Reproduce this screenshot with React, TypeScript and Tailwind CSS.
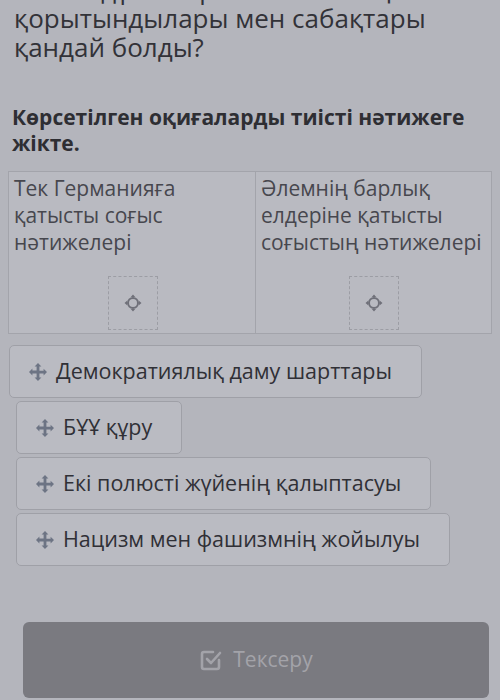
import React from "react";

const items = [
	{ label: "Демократиялық даму шарттары", indent: false },
	{ label: "БҰҰ құру", indent: true },
	{ label: "Екі полюсті жүйенің қалыптасуы", indent: true },
	{ label: "Нацизм мен фашизмнің жойылуы", indent: true },
];

function MoveIcon({ className }: { className?: string }) {
	return (
		<svg width="20" height="20" viewBox="0 0 20 20" className={className} fill="currentColor">
			<path d="M10 1l3.4 3.6h-2v4.2h4.2v-2L19 10l-3.4 3.4v-2h-4.2v4.2h2L10 19l-3.4-3.4h2v-4.2H4.4v2L1 10l3.4-3.4v2h4.2V4.6h-2z" />
		</svg>
	);
}

function TargetIcon() {
	return (
		<svg width="18" height="18" viewBox="0 0 18 18" className="text-[#6f7079]">
			<circle cx="9" cy="9" r="5" fill="none" stroke="currentColor" strokeWidth="2" />
			<path d="M9 0.5l2.2 2.6H6.8z M9 17.5l2.2-2.6H6.8z M0.5 9l2.6-2.2v4.4z M17.5 9l-2.6-2.2v4.4z" fill="currentColor" />
		</svg>
	);
}

function DropCell({ title, pad }: { title: string; pad: string }) {
	return (
		<div className="h-full flex flex-col px-[5px] pt-[3px] pb-[3px]">
			<p className="text-[21px] leading-[27px] text-[#47474e]">{title}</p>
			<div className={`mt-auto flex ${pad}`}>
				<div className="w-[50px] h-[54px] border border-dashed border-[#9c9da4] flex items-center justify-center">
					<TargetIcon />
				</div>
			</div>
		</div>
	);
}

export default function App() {
	return (
		<div
			className="w-[500px] h-[700px] overflow-hidden bg-[#b4b5bc] flex flex-col"
			style={{ fontFamily: '"Open Sans", "Noto Sans", sans-serif' }}
		>
			<h1 className="mt-[-25px] px-[14px] text-[26px] leading-[29px] text-[#323238]">
				Екінші дүниежүзілік соғыстың қорытындылары мен сабақтары қандай болды?
			</h1>

			<p className="mt-[42px] px-[12px] text-[21px] leading-[26px] font-bold text-[#2e2e33]">
				Көрсетілген оқиғаларды тиісті нәтижеге жікте.
			</p>

			<div className="mt-[15px] mx-[8px] h-[163px] grid grid-cols-[247px_1fr] border border-[#a3a4ab] bg-[#b9bac1]">
				<div className="border-r border-[#a3a4ab] h-full">
					<DropCell title="Тек Германияға қатысты соғыс нәтижелері" pad="pl-[94px]" />
				</div>
				<DropCell title="Әлемнің барлық елдеріне қатысты соғыстың нәтижелері" pad="pl-[88px]" />
			</div>

			<div className="mt-[11px] flex flex-col items-start gap-[3px]">
				{items.map((it) => (
					<div
						key={it.label}
						className={`${it.indent ? "ml-[16px]" : "ml-[9px]"} h-[53px] flex items-center gap-[8px] pl-[18px] pr-[29px] rounded-[5px] border border-[#9fa0a7] bg-[#babbc2]`}
					>
						<MoveIcon className="text-[#6d7484]" />
						<span className="text-[21.5px] text-[#303036]">{it.label}</span>
					</div>
				))}
			</div>

			<div className="mt-auto mb-[2px] ml-[23px] mr-[11px] h-[76px] rounded-[6px] bg-[#7a7a80] flex items-center justify-center gap-[10px] text-[#a3a3a9]">
				<svg width="24" height="24" viewBox="0 0 24 24" fill="none" stroke="currentColor" strokeWidth="2.6" strokeLinecap="round" strokeLinejoin="round">
					<path d="M20 12v7a2 2 0 0 1-2 2H5a2 2 0 0 1-2-2V6a2 2 0 0 1 2-2h9" />
					<path d="M8 11l4 4 9-10" />
				</svg>
				<span className="text-[21px]">Тексеру</span>
			</div>
		</div>
	);
}
